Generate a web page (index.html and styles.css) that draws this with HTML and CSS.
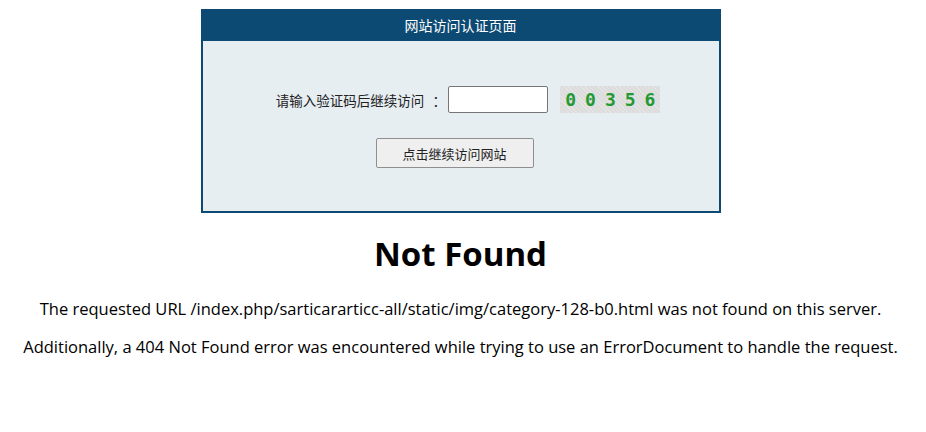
FILE: index.html
```html
<!DOCTYPE html>
<html lang="zh-CN">

<head>
  <meta charset="UTF-8">
  <title>404 Not Found</title>
  <link rel="stylesheet" href="styles.css">
</head>

<body>
  <!-- 访问验证框 -->
  <div class="verify_box">
    <div class="verify_title">网站访问认证页面</div>
    <form class="verify_form">
      <div class="verify_row">
        <label for="code">请输入验证码后继续访问<span class="colon">：</span></label>
        <input type="text" id="code" class="code_input">
        <span class="code_img">00356</span>
      </div>
      <button type="button" class="verify_btn">点击继续访问网站</button>
    </form>
  </div>

  <h1 class="nf_title">Not Found</h1>
  <p>The requested URL /index.php/sarticararticc-all/static/img/category-128-b0.html was not found on this server.</p>
  <p>Additionally, a 404 Not Found error was encountered while trying to use an ErrorDocument to handle the request.</p>
</body>

</html>
```

FILE: styles.css
```css
* {
  box-sizing: border-box;
}

body {
  margin: 9px 13px 8px 8px;
  font-family: "Open Sans", "Noto Sans CJK SC", sans-serif;
  font-size: 16.5px;
  color: #000;
  background: #fff;
  text-align: center;
}

.verify_box {
  width: 520px;
  height: 204px;
  margin: 0 auto;
  border: 2px solid #0d4a73;
  background-color: #e6eef2;
  font-family: "Noto Sans CJK SC", sans-serif;
}

.verify_title {
  height: 30px;
  line-height: 28px;
  background-color: #0d4a73;
  color: #fff;
  font-size: 14px;
}

.verify_form {
  padding-top: 45px;
}

.verify_row {
  display: flex;
  justify-content: center;
  align-items: center;
  padding-left: 15px;
  font-size: 13.5px;
  color: #222;
}

.colon {
  display: inline-block;
  width: 14px;
  margin-left: 8px;
}

.code_input {
  width: 100px;
  height: 27px;
  margin: 0 12px 0 2px;
  border: 1px solid #767676;
  border-radius: 2px;
  background: #fff;
}

.code_img {
  width: 100px;
  height: 27px;
  line-height: 27px;
  background-color: #dcdcdc;
  background-image: repeating-linear-gradient(45deg, rgba(255, 255, 255, 0.25) 0 1px, transparent 1px 3px);
  color: #229933;
  font-family: "DejaVu Sans Mono", monospace;
  font-weight: bold;
  font-size: 18px;
  letter-spacing: 9px;
  text-indent: 5px;
  text-align: left;
}

.verify_btn {
  width: 158px;
  height: 30px;
  margin: 25px 12px 0 0;
  border: 1px solid #8f8f8f;
  border-radius: 2px;
  background-color: #efefef;
  font-family: "Noto Sans CJK SC", sans-serif;
  font-size: 13px;
  color: #222;
}

.nf_title {
  margin: 19px 0 22px;
  font-size: 33px;
  font-weight: bold;
  line-height: 44px;
}

p {
  margin: 0 0 16px;
  line-height: 22px;
}
```
